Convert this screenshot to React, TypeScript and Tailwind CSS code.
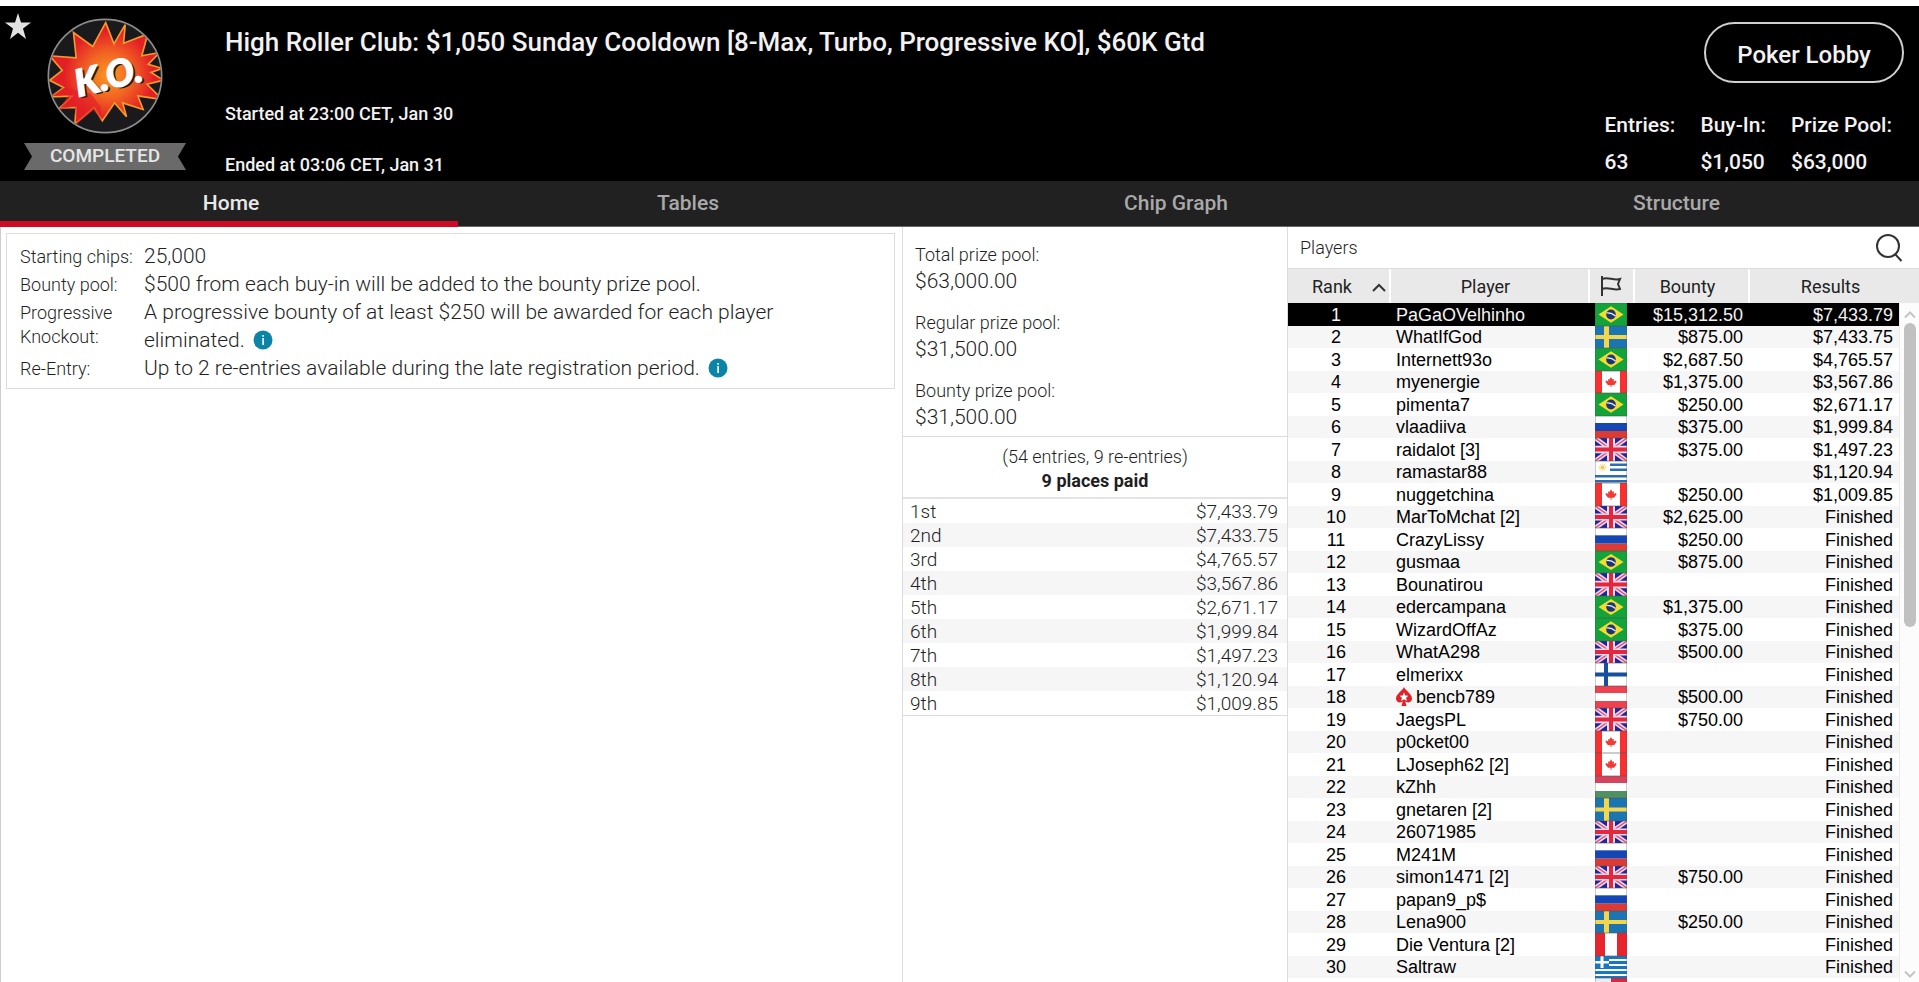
import { Fragment, type ReactNode } from "react";

type Country = "br" | "se" | "ca" | "ru" | "gb" | "uy" | "fi" | "at" | "hu" | "pe" | "gr" | "mt";

type Player = {
  rank?: number;
  name: string;
  country: Country;
  bounty?: string;
  result: string;
  pro?: boolean;
};

const tabs = ["Home", "Tables", "Chip Graph", "Structure"];

const stats = [
  { label: "Entries:", value: "63" },
  { label: "Buy-In:", value: "$1,050" },
  { label: "Prize Pool:", value: "$63,000" },
];

const info = [
  { label: "Starting chips:", value: "25,000" },
  { label: "Bounty pool:", value: "$500 from each buy-in will be added to the bounty prize pool." },
  {
    label: "Progressive Knockout:",
    value: "A progressive bounty of at least $250 will be awarded for each player eliminated.",
    tip: true,
  },
  { label: "Re-Entry:", value: "Up to 2 re-entries available during the late registration period.", tip: true },
];

const pools = [
  { label: "Total prize pool:", value: "$63,000.00" },
  { label: "Regular prize pool:", value: "$31,500.00" },
  { label: "Bounty prize pool:", value: "$31,500.00" },
];

const payouts = [
  ["1st", "$7,433.79"],
  ["2nd", "$7,433.75"],
  ["3rd", "$4,765.57"],
  ["4th", "$3,567.86"],
  ["5th", "$2,671.17"],
  ["6th", "$1,999.84"],
  ["7th", "$1,497.23"],
  ["8th", "$1,120.94"],
  ["9th", "$1,009.85"],
];

const players: Player[] = [
  { rank: 1, name: "PaGaOVelhinho", country: "br", bounty: "$15,312.50", result: "$7,433.79" },
  { rank: 2, name: "WhatIfGod", country: "se", bounty: "$875.00", result: "$7,433.75" },
  { rank: 3, name: "Internett93o", country: "br", bounty: "$2,687.50", result: "$4,765.57" },
  { rank: 4, name: "myenergie", country: "ca", bounty: "$1,375.00", result: "$3,567.86" },
  { rank: 5, name: "pimenta7", country: "br", bounty: "$250.00", result: "$2,671.17" },
  { rank: 6, name: "vlaadiiva", country: "ru", bounty: "$375.00", result: "$1,999.84" },
  { rank: 7, name: "raidalot [3]", country: "gb", bounty: "$375.00", result: "$1,497.23" },
  { rank: 8, name: "ramastar88", country: "uy", result: "$1,120.94" },
  { rank: 9, name: "nuggetchina", country: "ca", bounty: "$250.00", result: "$1,009.85" },
  { rank: 10, name: "MarToMchat [2]", country: "gb", bounty: "$2,625.00", result: "Finished" },
  { rank: 11, name: "CrazyLissy", country: "ru", bounty: "$250.00", result: "Finished" },
  { rank: 12, name: "gusmaa", country: "br", bounty: "$875.00", result: "Finished" },
  { rank: 13, name: "Bounatirou", country: "gb", result: "Finished" },
  { rank: 14, name: "edercampana", country: "br", bounty: "$1,375.00", result: "Finished" },
  { rank: 15, name: "WizardOffAz", country: "br", bounty: "$375.00", result: "Finished" },
  { rank: 16, name: "WhatA298", country: "gb", bounty: "$500.00", result: "Finished" },
  { rank: 17, name: "elmerixx", country: "fi", result: "Finished" },
  { rank: 18, name: "bencb789", country: "at", bounty: "$500.00", result: "Finished", pro: true },
  { rank: 19, name: "JaegsPL", country: "gb", bounty: "$750.00", result: "Finished" },
  { rank: 20, name: "p0cket00", country: "ca", result: "Finished" },
  { rank: 21, name: "LJoseph62 [2]", country: "ca", result: "Finished" },
  { rank: 22, name: "kZhh", country: "hu", result: "Finished" },
  { rank: 23, name: "gnetaren [2]", country: "se", result: "Finished" },
  { rank: 24, name: "26071985", country: "gb", result: "Finished" },
  { rank: 25, name: "M241M", country: "ru", result: "Finished" },
  { rank: 26, name: "simon1471 [2]", country: "gb", bounty: "$750.00", result: "Finished" },
  { rank: 27, name: "papan9_p$", country: "ru", result: "Finished" },
  { rank: 28, name: "Lena900", country: "se", bounty: "$250.00", result: "Finished" },
  { rank: 29, name: "Die Ventura [2]", country: "pe", result: "Finished" },
  { rank: 30, name: "Saltraw", country: "gr", result: "Finished" },
  { name: "", country: "mt", result: "" },
];

// every flag is drawn on a 32x22 canvas
const flags: Record<Country, ReactNode> = {
  br: (
    <>
      <path fill="#12a33a" d="M0 0h32v22H0z" />
      <path fill="#f6dc2e" d="M16 3l12.500 8L16 19 3.500 11z" />
      <circle cx="16" cy="11" r="4.800" fill="#1c3578" />
      <path d="M11.500 9.500q5-.5 9 3" stroke="#e8eef5" strokeWidth="1.300" fill="none" />
    </>
  ),
  se: (
    <>
      <path fill="#1b75b3" d="M0 0h32v22H0z" />
      <path fill="#f5d54a" d="M9 0h5v22H9zM0 9h32v4H0z" />
    </>
  ),
  ca: (
    <>
      <path fill="#fff" d="M0 0h32v22H0z" />
      <path fill="#f8302f" d="M0 0h7v22H0zM25 0h7v22h-7z" />
      <path
        fill="#f03a36"
        d="M16 6l1.500 2.500 1.500-.5-.3 2.500 2.300-1 .5 1.500-2.500 3.200-2.500-.2v2h-1v-2l-2.500.2L10.500 11l.5-1.500 2.300 1L13 8l1.500.5z"
      />
    </>
  ),
  ru: (
    <>
      <path fill="#fff" d="M0 0h32v8H0z" />
      <path fill="#1446b4" d="M0 7h32v8H0z" />
      <path fill="#dd3a33" d="M0 15h32v7H0z" />
    </>
  ),
  gb: (
    <>
      <path fill="#23239a" d="M0 0h32v22H0z" />
      <path d="M0 0l32 22M32 0L0 22" stroke="#e6d6ee" strokeWidth="4.500" />
      <path d="M0 0l32 22M32 0L0 22" stroke="#e8476a" strokeWidth="1.300" />
      <path fill="#f1dbe8" d="M12 0h8v22h-8zM0 7.500h32v7H0z" />
      <path fill="#e4263f" d="M14 0h4v22h-4zM0 9h32v4H0z" />
    </>
  ),
  uy: (
    <>
      <path fill="#fff" d="M0 0h32v22H0z" />
      <path fill="#2c6cb5" d="M15 2.500h17v2.500H15zM15 7.500h17v2.500H15zM0 14h32v2.500H0zM0 19h32v2.500H0z" />
      <circle cx="7.500" cy="6.500" r="2" fill="#f3c84b" />
      <circle cx="7.500" cy="6.500" r="3.200" fill="none" stroke="#f3d685" strokeWidth="1.500" strokeDasharray="1 1" />
    </>
  ),
  fi: (
    <>
      <path fill="#fff" d="M0 0h32v22H0z" />
      <path fill="#14509c" d="M9 0h4v22H9zM0 9h32v4H0z" />
    </>
  ),
  at: (
    <>
      <path fill="#ef4250" d="M0 0h32v22H0z" />
      <path fill="#fff" d="M0 7h32v8H0z" />
    </>
  ),
  hu: (
    <>
      <path fill="#d6435a" d="M0 0h32v8H0z" />
      <path fill="#fff" d="M0 7h32v8H0z" />
      <path fill="#4f9163" d="M0 15h32v7H0z" />
    </>
  ),
  pe: (
    <>
      <path fill="#e8242f" d="M0 0h32v22H0z" />
      <path fill="#fff" d="M10 0h12v22H10z" />
    </>
  ),
  gr: (
    <>
      <path fill="#1877c2" d="M0 0h32v22H0z" />
      <path fill="#fff" d="M14 3h18v2H14zM14 8h18v2H14zM0 13h32v2H0zM0 18h32v2H0zM5.500 0h3v12h-3zM0 5h14v2.500H0z" />
    </>
  ),
  mt: (
    <>
      <path fill="#e8edf3" d="M0 0h16v22H0z" />
      <path fill="#cf2c48" d="M16 0h16v22H16z" />
    </>
  ),
};

function Flag({ country, tall }: { country: Country; tall: boolean }) {
  return (
    <svg
      viewBox="0 0 32 22"
      preserveAspectRatio="none"
      className={`block w-8 ${tall ? "h-[23px]" : "h-[22px]"}`}
      aria-hidden="true"
    >
      {flags[country]}
      <path d="M0 0h32v22H0z" fill="none" stroke="#555" strokeOpacity="0.6" />
    </svg>
  );
}

function KoLogo() {
  return (
    <svg viewBox="138 52 350 350" className="block size-[116px]" aria-hidden="true">
      <defs>
        <radialGradient id="burst" gradientUnits="userSpaceOnUse" cx="325" cy="225" r="150">
          <stop offset="0" stopColor="#fb9a1f" />
          <stop offset="0.45" stopColor="#f26522" />
          <stop offset="0.9" stopColor="#e31f26" />
        </radialGradient>
        <clipPath id="disc">
          <circle cx="313" cy="227" r="169" />
        </clipPath>
      </defs>
      <circle cx="313" cy="227" r="170" fill="#1a1a1c" />
      <g clipPath="url(#disc)">
        <path
          d="M315 66L340 130L374 72L369 128L442 100L424 166L478 156L443 192L486 204L452 216L490 240L440 252L486 298L412 287L428 328L366 308L378 350L342 308L305 362L280 322L222 372L226 322L176 324L214 288L150 290L188 262L146 240L184 210L146 166L226 172L218 96L276 138Z"
          fill="url(#burst)"
          stroke="#f39a2b"
          strokeWidth="5"
        />
        <path d="M228 372L222 318L172 330L205 282L150 288L190 262L270 280L300 320L304 360L278 330Z" fill="#e31f26" opacity="0.6" />
      </g>
      <circle cx="313" cy="227" r="171" fill="none" stroke="#8d8d8d" strokeWidth="5" />
      <g transform="rotate(-14 230 292)" fontFamily="Lato, sans-serif" fontWeight="900" fontStyle="italic" fontSize="112">
        <text x="239" y="297" fill="#2b1a1a">K.O.</text>
        <text x="233" y="291" fill="#fff" stroke="#fff" strokeWidth="4">K.O.</text>
      </g>
    </svg>
  );
}

function InfoTip() {
  return (
    <button type="button" aria-label="More information" className="ml-2 inline-block size-5 align-[-3px]">
      <svg viewBox="0 0 20 20" className="block size-5" aria-hidden="true">
        <circle cx="10" cy="10" r="9.500" fill="#0b84a5" />
        <path d="M9.300 8h1.600v7H9.300zM9.300 5h1.600v1.700H9.300z" fill="#fff" />
      </svg>
    </button>
  );
}

function Spade() {
  return (
    <svg viewBox="0 0 16 19" className="mr-1 inline-block h-[19px] w-4 align-[-3px]" aria-hidden="true">
      <path
        d="M8 0C9 3 16 7 16 11.500c0 2.500-2 4-4 4-1 0-2-.5-2.700-1.200L10.500 19h-5l1.200-4.700C6 15 5 15.500 4 15.500c-2 0-4-1.500-4-4C0 7 7 3 8 0z"
        fill="#e02128"
      />
      <path d="M8 5.500l1.300 2.900 3.100.3-2.300 2.100.7 3.100L8 12.300l-2.800 1.600.7-3.100-2.300-2.100 3.100-.3z" fill="#fff" />
    </svg>
  );
}

function Header() {
  return (
    <header className="flex h-[175px] bg-black font-medium text-[#f2f2f2]">
      <div className="relative flex w-[225px] shrink-0 flex-col items-start pl-6">
        <button type="button" aria-label="Add to favourites" className="absolute left-[5px] top-[7px]">
          <svg viewBox="0 0 26 26" className="block size-[26px]" aria-hidden="true">
            <path d="M13 0l3 9.500h10l-8 6 3 10.500-8-6.300L5 26l3-10.500-8-6h10z" fill="#e2e2e2" />
          </svg>
        </button>
        <div className="flex w-[162px] flex-col items-center pt-3">
          <KoLogo />
          <div className="relative mt-[9px] flex h-[27px] w-full items-center justify-center text-[19px]">
            <svg viewBox="0 0 162 27" preserveAspectRatio="none" className="absolute inset-0 size-full" aria-hidden="true">
              <path d="M0 0h162l-8 13.500 8 13.500H0l8-13.500z" fill="#6a6a6a" />
            </svg>
            <span className="relative text-[#e6e6e6]">COMPLETED</span>
          </div>
        </div>
      </div>
      <div className="min-w-0 flex-1 pt-5">
        <h1 className="text-[26px] leading-8">
          High Roller Club: $1,050 Sunday Cooldown [8-Max, Turbo, Progressive KO], $60K Gtd
        </h1>
        <p className="mt-[42px] text-[18px] leading-7">Started at 23:00 CET, Jan 30</p>
        <p className="mt-[23px] text-[18px] leading-7">Ended at 03:06 CET, Jan 31</p>
      </div>
      <div className="flex shrink-0 flex-col items-end pr-[15px] pt-4">
        <button type="button" className="h-[67px] w-[200px] rounded-full border-2 border-[#d0d0d0] pt-1 text-[24px]">
          Poker Lobby
        </button>
        <dl className="mt-6 flex gap-[25px] pr-3 text-[21px]">
          {stats.map((s) => (
            <div key={s.label}>
              <dt className="leading-[37px]">{s.label}</dt>
              <dd className="leading-[37px]">{s.value}</dd>
            </div>
          ))}
        </dl>
      </div>
    </header>
  );
}

function Tabs() {
  return (
    <nav className="grid h-[46px] grid-cols-[458fr_460fr_516fr_485fr] bg-[#212121] text-[21px] font-medium">
      {tabs.map((tab, i) => (
        <button
          key={tab}
          type="button"
          className={
            i === 0
              ? "border-b-[6px] border-[#d00a24] pl-1 pt-1.5 text-[#e8e8e8]"
              : "border-b border-[#666] text-[#a9a9a9]"
          }
        >
          {tab}
        </button>
      ))}
    </nav>
  );
}

function InfoPanel() {
  return (
    <section className="border-l border-[#ccc] pl-[5px] pr-[7px] pt-[6px]">
      <dl className="grid grid-cols-[124px_minmax(0,1fr)] border border-[#dcdcdc] pb-1.5 pl-[13px] pr-[90px] pt-2 font-light">
        {info.map((row) => (
          <Fragment key={row.label}>
            <dt className="pt-[3px] text-[18px] leading-6">{row.label}</dt>
            <dd className="text-[21px] leading-7">
              {row.value}
              {row.tip && <InfoTip />}
            </dd>
          </Fragment>
        ))}
      </dl>
    </section>
  );
}

function PrizePanel() {
  return (
    <section className="border-l border-[#dcdcdc]">
      <dl className="flex flex-col gap-4 border-b border-[#dcdcdc] pb-[5px] pl-3 pt-4 font-light">
        {pools.map((p) => (
          <div key={p.label}>
            <dt className="text-[18px] leading-6">{p.label}</dt>
            <dd className="text-[21px] leading-7">{p.value}</dd>
          </div>
        ))}
      </dl>
      <div className="border-b-2 border-[#e4e4e4] pb-1 pt-2 text-center text-[18px] leading-6">
        <p className="font-light">(54 entries, 9 re-entries)</p>
        <p className="font-bold">9 places paid</p>
      </div>
      <table className="w-full border-b border-[#dcdcdc] text-[19px] font-light">
        <tbody>
          {payouts.map(([place, prize]) => (
            <tr key={place} className="even:bg-[#f6f6f6]">
              <td className="pl-[7px] pt-0.5 leading-[22px]">{place}</td>
              <td className="pr-[9px] pt-0.5 text-right leading-[22px]">{prize}</td>
            </tr>
          ))}
        </tbody>
      </table>
    </section>
  );
}

function PlayersPanel() {
  return (
    <section className="relative overflow-hidden border-l border-[#dcdcdc]">
      <div className="flex h-[42px] items-center justify-between border-b border-[#dcdcdc] pl-3 pr-4">
        <h2 className="text-[18px] font-light">Players</h2>
        <button type="button" aria-label="Search players">
          <svg viewBox="0 0 28 28" className="block size-7" fill="none" stroke="#333" strokeWidth="2" aria-hidden="true">
            <circle cx="13" cy="12" r="11" />
            <path d="M20 20l6.500 7" />
          </svg>
        </button>
      </div>
      <table className="w-full table-fixed text-[18px] text-black">
        <colgroup>
          <col className="w-[102px]" />
          <col className="w-[199px]" />
          <col className="w-[45px]" />
          <col className="w-[115px]" />
          <col />
          <col className="w-5" />
        </colgroup>
        <thead>
          <tr className="h-[34px] bg-[#e9e9e9] text-[#222]">
            <th className="border-r-2 border-white pl-6 text-left font-normal">
              Rank
              <svg viewBox="0 0 14 9" className="ml-5 inline-block h-[9px] w-3.5" fill="none" stroke="#333" strokeWidth="2" aria-hidden="true">
                <path d="M1 8l6-6 6 6" />
              </svg>
            </th>
            <th className="border-r-2 border-white pr-2 font-normal">Player</th>
            <th className="border-r-2 border-white">
              <svg viewBox="0 0 22 20" className="ml-2.5 h-5 w-[22px]" fill="none" stroke="#333" strokeWidth="2" role="img" aria-label="Country">
                <path d="M2 0v20M2 3c6-3 11 2 18 0l-2 5 2 5c-7 2-12-3-18 0" />
              </svg>
            </th>
            <th className="border-r-2 border-white pr-2 font-normal">Bounty</th>
            <th colSpan={2} className="pr-2 font-normal">
              Results
            </th>
          </tr>
        </thead>
        <tbody className="font-['Liberation_Sans',Arial,sans-serif]">
          {players.map((p, i) => (
            <tr
              key={i}
              className={`leading-[22px] ${i === 0 ? "bg-black text-[#f2f2f2]" : i % 2 ? "bg-[#f6f6f6]" : "bg-white"}`}
            >
              <td className="pr-1.5 text-center">{p.rank}</td>
              <td className="whitespace-nowrap pl-1.5">
                {p.pro && <Spade />}
                {p.name}
              </td>
              <td className="pl-1.5">
                <Flag country={p.country} tall={i % 2 === 0} />
              </td>
              <td className="pr-1.5 text-right">{p.bounty}</td>
              <td className="pr-1.5 text-right">{p.result}</td>
              <td className="bg-[#fcfcfc]"></td>
            </tr>
          ))}
        </tbody>
      </table>
      <div className="absolute bottom-0 right-0 top-[76px] flex w-5 flex-col items-center border-l border-[#ececec] py-1">
        <svg viewBox="0 0 12 7" className="mt-1 h-2 w-3" fill="none" stroke="#c4c4c4" strokeWidth="2" aria-hidden="true">
          <path d="M1 6l5-5 5 5" />
        </svg>
        <div className="mt-1 flex w-3 flex-1 flex-col">
          <div className="h-[47%] rounded-full bg-[#c1c1c1]"></div>
        </div>
        <svg viewBox="0 0 12 7" className="h-2 w-3" fill="none" stroke="#c4c4c4" strokeWidth="2" aria-hidden="true">
          <path d="M1 1l5 5 5-5" />
        </svg>
      </div>
    </section>
  );
}

export default function App() {
  return (
    <div className="flex h-screen flex-col overflow-hidden bg-white pt-1.5 font-[Roboto,sans-serif] text-[#1f1f1f]">
      <Header />
      <Tabs />
      <main className="grid min-h-0 flex-1 grid-cols-[902fr_385fr_632fr]">
        <InfoPanel />
        <PrizePanel />
        <PlayersPanel />
      </main>
    </div>
  );
}
